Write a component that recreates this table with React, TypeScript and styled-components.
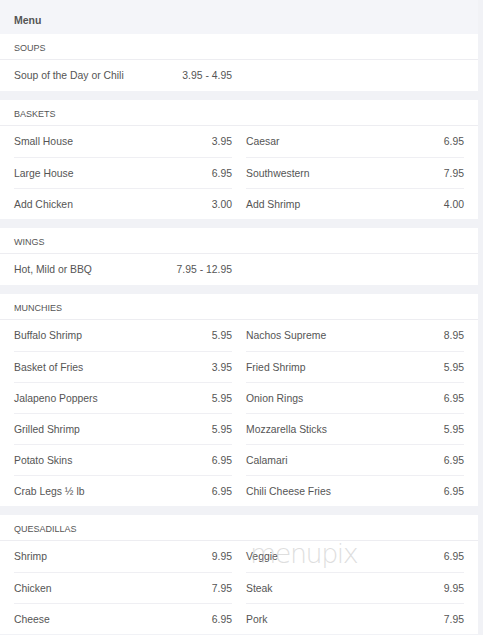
import styled, { createGlobalStyle } from 'styled-components';

type Item = { name: string; price: string };
type Section = { title: string; items: Item[] };

const sections: Section[] = [
    { title: 'SOUPS', items: [{ name: 'Soup of the Day or Chili', price: '3.95 - 4.95' }] },
    {
        title: 'BASKETS',
        items: [
            { name: 'Small House', price: '3.95' },
            { name: 'Caesar', price: '6.95' },
            { name: 'Large House', price: '6.95' },
            { name: 'Southwestern', price: '7.95' },
            { name: 'Add Chicken', price: '3.00' },
            { name: 'Add Shrimp', price: '4.00' }
        ]
    },
    { title: 'WINGS', items: [{ name: 'Hot, Mild or BBQ', price: '7.95 - 12.95' }] },
    {
        title: 'MUNCHIES',
        items: [
            { name: 'Buffalo Shrimp', price: '5.95' },
            { name: 'Nachos Supreme', price: '8.95' },
            { name: 'Basket of Fries', price: '3.95' },
            { name: 'Fried Shrimp', price: '5.95' },
            { name: 'Jalapeno Poppers', price: '5.95' },
            { name: 'Onion Rings', price: '6.95' },
            { name: 'Grilled Shrimp', price: '5.95' },
            { name: 'Mozzarella Sticks', price: '5.95' },
            { name: 'Potato Skins', price: '6.95' },
            { name: 'Calamari', price: '6.95' },
            { name: 'Crab Legs ½ lb', price: '6.95' },
            { name: 'Chili Cheese Fries', price: '6.95' }
        ]
    },
    {
        title: 'QUESADILLAS',
        items: [
            { name: 'Shrimp', price: '9.95' },
            { name: 'Veggie', price: '6.95' },
            { name: 'Chicken', price: '7.95' },
            { name: 'Steak', price: '9.95' },
            { name: 'Cheese', price: '6.95' },
            { name: 'Pork', price: '7.95' }
        ]
    }
];

const GlobalStyle = createGlobalStyle`
    body {
        margin: 0;
        background: #f1f2f6;
        font-family: "Liberation Sans", Arial, sans-serif;
        color: #555;
    }
`;

const Page = () => {
    return (
        <>
            <GlobalStyle />
            <Wrapper>
                <Header>Menu</Header>
                {sections.map((s) => (
                    <Card key={s.title}>
                        <Label>{s.title}</Label>
                        <Grid>
                            {s.items.map((it, i) => (
                                <Row key={it.name} $first={i < 2}>
                                    <span>{it.name}</span>
                                    <span>{it.price}</span>
                                </Row>
                            ))}
                        </Grid>
                    </Card>
                ))}
                <Watermark>menupix</Watermark>
            </Wrapper>
        </>
    );
};

const Wrapper = styled.div`
    position: relative;
    width: 478px;
    display: flex;
    flex-direction: column;
    gap: 9px;
    background: #f1f2f6;
`;

const Header = styled.div`
    height: 34px;
    margin-bottom: -9px;
    padding: 5px 14px 0;
    display: flex;
    align-items: center;
    box-sizing: border-box;
    background: #f4f5f9;
    font-size: 10.5px;
    font-weight: bold;
    color: #555;
`;

const Card = styled.div`
    background: #fff;
`;

const Label = styled.div`
    height: 26px;
    padding: 2px 14px 0;
    display: flex;
    align-items: center;
    font-size: 9px;
    color: #555;
    border-bottom: 1px solid #ededf1;
    box-sizing: border-box;
`;

const Grid = styled.div`
    display: grid;
    grid-template-columns: 218px 218px;
    column-gap: 14px;
    padding: 0 14px;
`;

const Row = styled.div<{ $first: boolean }>`
    height: 31px;
    display: flex;
    align-items: center;
    justify-content: space-between;
    font-size: 10.4px;
    color: #555;
    box-sizing: border-box;
    border-top: ${(p) => (p.$first ? 'none' : '1px solid #efeff3')};
`;

const Watermark = styled.div`
    position: absolute;
    left: 250px;
    top: 538px;
    font-family: "DejaVu Sans", sans-serif;
    font-weight: 200;
    font-size: 27px;
    letter-spacing: -1.5px;
    color: rgba(190, 190, 190, 0.5);
    pointer-events: none;
`;

export default Page;
